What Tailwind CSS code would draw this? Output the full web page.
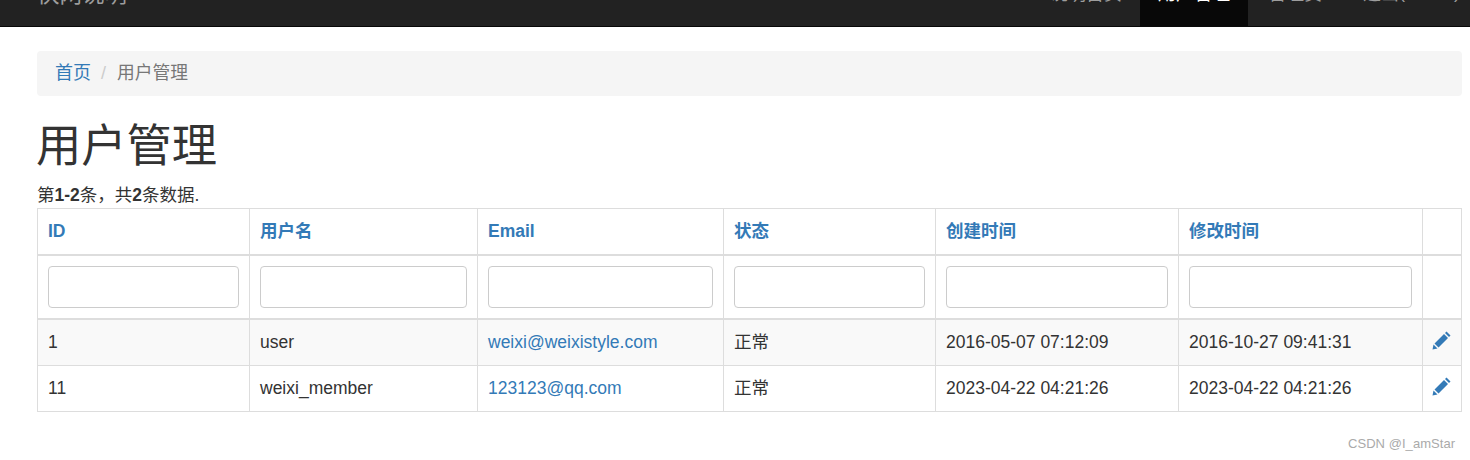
<!DOCTYPE html>
<html lang="zh">
<head>
<meta charset="utf-8">
<script src="https://cdn.jsdelivr.net/npm/@tailwindcss/browser@4"></script>
</head>
<body class="relative h-[460px] w-[1470px] overflow-hidden bg-white font-['Liberation_Sans','Noto_Sans_CJK_SC',sans-serif] text-[17.5px] leading-[23px] text-[#333]">
<nav class="flex h-[27px] items-start justify-between overflow-hidden border-b border-b-[#080808] bg-[#222]">
  <div class="ml-[37px] -mt-[19px] shrink-0 text-[22.5px] leading-[28px] text-[#9d9d9d]">快网说明</div>
  <ul class="-mr-[6px] flex h-full shrink-0 text-[18px] leading-[20px] text-[#9d9d9d]">
    <li class="w-[108px] text-center"><span class="block -mt-[16px]">说明首页</span></li>
    <li class="w-[108px] bg-[#080808] text-center text-white"><span class="block -mt-[16px]">用户管理</span></li>
    <li class="w-[95px] pl-[20px]"><span class="block -mt-[16px]">管理员</span></li>
    <li class="w-[133px] pl-[20px]"><span class="block -mt-[18px]"><span class="relative top-[2px]">退出</span>(admin)</span></li>
  </ul>
</nav>
<main class="pl-[37px] pr-[8px]">
  <div class="mt-[24px] flex h-[45px] items-center rounded-[4px] bg-[#f5f5f5] px-[18px] text-[18px]">
    <a class="text-[#337ab7]">首页</a><span class="ml-[10px] text-[#ccc]">/</span><span class="ml-[11px] text-[17.75px] text-[#777]">用户管理</span>
  </div>
  <h1 class="mt-[24px] -ml-[1px] text-[45.25px] leading-[54px] font-normal">用户管理</h1>
  <p class="mt-[11px] h-[23px] leading-[21px]">第<b>1-2</b>条，共<b>2</b>条数据.</p>
  <table class="w-[1424px] table-fixed border-collapse leading-[25px]">
    <colgroup>
      <col class="w-[212px]"><col class="w-[228px]"><col class="w-[246px]"><col class="w-[212px]"><col class="w-[243px]"><col class="w-[244px]"><col class="w-[39px]">
    </colgroup>
    <thead class="font-bold text-[#337ab7]">
      <tr class="h-[46px]">
        <th class="border border-[#ddd] border-b-2 px-[10px] text-left">ID</th>
        <th class="border border-[#ddd] border-b-2 px-[10px] text-left">用户名</th>
        <th class="border border-[#ddd] border-b-2 px-[10px] text-left">Email</th>
        <th class="border border-[#ddd] border-b-2 px-[10px] text-left">状态</th>
        <th class="border border-[#ddd] border-b-2 px-[10px] text-left">创建时间</th>
        <th class="border border-[#ddd] border-b-2 px-[10px] text-left">修改时间</th>
        <th class="border border-[#ddd] border-b-2 px-[10px] text-left"></th>
      </tr>
      <tr class="h-[64px]">
        <td class="border border-[#ddd] border-b-2 px-[10px]"><div class="h-[42px] rounded-[4px] border border-[#ccc] bg-white"></div></td>
        <td class="border border-[#ddd] border-b-2 px-[10px]"><div class="h-[42px] rounded-[4px] border border-[#ccc] bg-white"></div></td>
        <td class="border border-[#ddd] border-b-2 px-[10px]"><div class="h-[42px] rounded-[4px] border border-[#ccc] bg-white"></div></td>
        <td class="border border-[#ddd] border-b-2 px-[10px]"><div class="h-[42px] rounded-[4px] border border-[#ccc] bg-white"></div></td>
        <td class="border border-[#ddd] border-b-2 px-[10px]"><div class="h-[42px] rounded-[4px] border border-[#ccc] bg-white"></div></td>
        <td class="border border-[#ddd] border-b-2 px-[10px]"><div class="h-[42px] rounded-[4px] border border-[#ccc] bg-white"></div></td>
        <td class="border border-[#ddd] border-b-2 px-[10px]"></td>
      </tr>
    </thead>
    <tbody>
      <tr class="h-[47px] bg-[#f9f9f9]">
        <td class="border border-[#ddd] px-[10px]">1</td>
        <td class="border border-[#ddd] px-[10px]">user</td>
        <td class="border border-[#ddd] px-[10px] text-[#337ab7]">weixi@weixistyle.com</td>
        <td class="border border-[#ddd] px-[10px]">正常</td>
        <td class="border border-[#ddd] px-[10px]">2016-05-07 07:12:09</td>
        <td class="border border-[#ddd] px-[10px]">2016-10-27 09:41:31</td>
        <td class="border border-[#ddd] pl-[9px]"><svg class="size-[19px] -translate-y-[2px]" viewBox="0 0 19 19"><path fill="#337ab7" d="M0.5 18.5 L1.5 13.5 L5.5 17.5 Z M2.5 12.5 L12 3 L16 7 L6.5 16.5 Z M13 2 L14.5 0.5 L18.5 4.5 L17 6 Z"/></svg></td>
      </tr>
      <tr class="h-[46px]">
        <td class="border border-[#ddd] px-[10px]">11</td>
        <td class="border border-[#ddd] px-[10px]">weixi_member</td>
        <td class="border border-[#ddd] px-[10px] text-[#337ab7]">123123@qq.com</td>
        <td class="border border-[#ddd] px-[10px]">正常</td>
        <td class="border border-[#ddd] px-[10px]">2023-04-22 04:21:26</td>
        <td class="border border-[#ddd] px-[10px]">2023-04-22 04:21:26</td>
        <td class="border border-[#ddd] pl-[9px]"><svg class="size-[19px] -translate-y-[2px]" viewBox="0 0 19 19"><path fill="#337ab7" d="M0.5 18.5 L1.5 13.5 L5.5 17.5 Z M2.5 12.5 L12 3 L16 7 L6.5 16.5 Z M13 2 L14.5 0.5 L18.5 4.5 L17 6 Z"/></svg></td>
      </tr>
    </tbody>
  </table>
</main>
<div class="absolute left-[1348px] top-[436px] text-[13px] leading-[16px] tracking-[0.05px] text-[#aaa]">CSDN @I_amStar</div>
</body>
</html>
